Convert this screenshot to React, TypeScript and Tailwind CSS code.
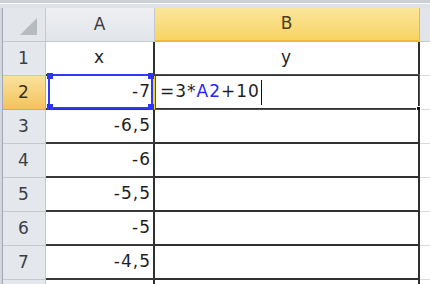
import React from 'react';

const FONT = { fontFamily: '"DejaVu Sans", "Liberation Sans", sans-serif' };

const ROWS = [
  { n: 1, a: 'x', b: 'y', header: true },
  { n: 2, a: '-7', b: '' },
  { n: 3, a: '-6,5', b: '' },
  { n: 4, a: '-6', b: '' },
  { n: 5, a: '-5,5', b: '' },
  { n: 6, a: '-5', b: '' },
  { n: 7, a: '-4,5', b: '' },
  { n: 8, a: '', b: '', hidden: true },
];

function Corner() {
  return (
    <div className="relative w-[43px] h-full bg-[#e3e6eb] border-r border-b border-[#c4c9d0]">
      <svg className="absolute left-[17px] top-[10px]" width="17" height="17" viewBox="0 0 17 17">
        <polygon points="17,0 17,17 0,17" fill="#b6bbc2" />
      </svg>
    </div>
  );
}

function HandleSq({ pos }: { pos: string }) {
  return <div className={`absolute w-[6px] h-[6px] bg-[#2b35f0] ${pos}`} />;
}

export default function App() {
  return (
    <div className="w-[430px] h-[284px] overflow-hidden bg-white select-none text-[17px] tracking-[1px]" style={FONT}>
      {/* top strip */}
      <div className="h-[3px] bg-[#cdd1d7]" />
      <div className="h-[1px] bg-white" />
      <div className="h-[4px] bg-[#dfe2e7]" />

      {/* column header */}
      <div className="flex h-[34px]">
        <div className="w-[3px] bg-[#d3d7dd] border-r border-[#a2a9b3]" />
        <Corner />
        <div className="w-[109px] flex items-center justify-center bg-gradient-to-b from-[#eef0f3] to-[#e1e4e9] border-r border-b border-[#c4c9d0] text-[#3c3c3c]">
          A
        </div>
        <div className="w-[265px] flex items-center justify-center bg-gradient-to-b from-[#fbe59a] to-[#f8d462] border-r border-b-2 border-[#eeb740] text-[#4a4020]">
          B
        </div>
        <div className="flex-1 bg-[#e1e4e9] border-b border-[#c4c9d0]" />
      </div>

      {ROWS.map((r) => {
        const active = r.n === 2;
        return (
          <div key={r.n} className="flex h-[34px]">
            <div className="w-[3px] bg-[#d3d7dd] border-r border-[#a2a9b3]" />
            <div
              className={`w-[43px] flex items-center justify-center border-r border-b ${
                active
                  ? 'bg-gradient-to-b from-[#f9e19c] to-[#f3c45a] border-[#e2a83c] text-[#3a3220]'
                  : 'bg-[#e4e7ec] border-[#c4c9d0] text-[#3a3f47]'
              }`}
            >
              {!r.hidden && r.n}
            </div>
            <div
              className={`relative w-[109px] flex items-center ${
                r.header ? 'justify-center' : 'justify-end pr-[2px]'
              } border-b-2 border-[#383838] border-r-2 ${active ? 'border-r-[#f2d21b]' : 'border-r-[#303030]'} text-[#1f1f1f]`}
            >
              {r.a}
              {active && (
                <div className="absolute left-[2px] -top-[2px] right-[0px] -bottom-[1px] border-2 border-[#2f3bf2] pointer-events-none">
                  <HandleSq pos="-left-[3px] -top-[3px]" />
                  <HandleSq pos="-right-[3px] -top-[3px]" />
                  <HandleSq pos="-left-[3px] -bottom-[3px]" />
                  <HandleSq pos="-right-[3px] -bottom-[3px]" />
                </div>
              )}
            </div>
            <div
              className={`relative w-[265px] flex items-center ${
                r.header ? 'justify-center' : 'justify-start pl-[5px]'
              } border-b-2 border-r-2 border-[#303030] text-[#1f1f1f]`}
            >
              {r.header && r.b}
              {active && (
                <>
                  <span>
                    =3*<span className="text-[#2727f5]">A2</span>+10
                  </span>
                  <span className="ml-[1px] w-[1px] h-[25px] bg-[#111]" />
                  <div className="absolute left-0 -top-[2px] right-[-2px] -bottom-[2px] border border-[#505050] pointer-events-none" />
                  <div className="absolute -right-[3px] -bottom-[3px] w-[5px] h-[5px] bg-[#111] border border-white" />
                </>
              )}
            </div>
            <div className="flex-1 bg-white border-b border-[#dcdcdc]" />
          </div>
        );
      })}
    </div>
  );
}
